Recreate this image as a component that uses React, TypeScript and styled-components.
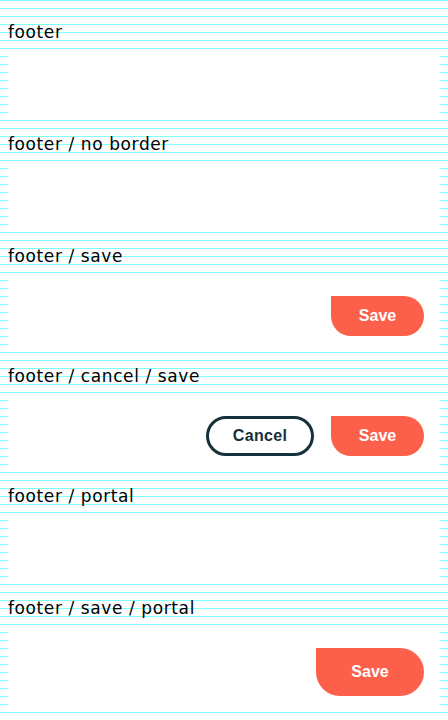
import React from 'react'
import styled, { createGlobalStyle, css } from 'styled-components'

const GlobalStyle = createGlobalStyle`
    html {
        background-color: #fff;
        background-image: repeating-linear-gradient(
            to bottom,
            #80ffff 0,
            #80ffff 1px,
            transparent 1px,
            transparent 8px
        );
        min-height: 100%;
    }
    body {
        margin: 8px;
        font-family: 'DejaVu Sans', 'Liberation Sans', sans-serif;
        color: #000;
    }
`

interface FooterDemo {
    title: string
    cancel?: boolean
    save?: boolean
    portal?: boolean
}

const demos: FooterDemo[] = [
    { title: 'footer' },
    { title: 'footer / no border' },
    { title: 'footer / save', save: true },
    { title: 'footer / cancel / save', cancel: true, save: true },
    { title: 'footer / portal', portal: true },
    { title: 'footer / save / portal', save: true, portal: true },
]

const App: React.FC = () => {
    return (
        <>
            <GlobalStyle />
            <Page>
                {demos.map(demo => (
                    <Section key={demo.title}>
                        <Title>{demo.title}</Title>
                        <Footer>
                            {demo.cancel && <CancelButton>Cancel</CancelButton>}
                            {demo.save && <SaveButton $large={demo.portal}>Save</SaveButton>}
                        </Footer>
                    </Section>
                ))}
            </Page>
        </>
    )
}

export default App

const Page = styled.div`
    display: flex;
    flex-direction: column;
`

const Section = styled.section`
    display: flex;
    flex-direction: column;
`

const Title = styled.div`
    height: 41px;
    box-sizing: border-box;
    padding-top: 14px;
    font-size: 17px;
    line-height: 20px;
    letter-spacing: 0.6px;
    color: #000;
`

const Footer = styled.div`
    display: flex;
    justify-content: flex-end;
    align-items: flex-start;
    gap: 17px;
    min-height: 71px;
    box-sizing: border-box;
    padding: 23px 16px 16px;
    background: #fff;
`

const baseButton = css`
    box-sizing: border-box;
    height: 40px;
    padding: 0;
    font-family: 'Liberation Sans', Arial, sans-serif;
    font-size: 16px;
    font-weight: 700;
    cursor: pointer;
`

const SaveButton = styled.button<{ $large?: boolean }>`
    ${baseButton};
    width: ${p => (p.$large ? '108px' : '93px')};
    height: ${p => (p.$large ? '48px' : '40px')};
    border: none;
    border-radius: ${p => (p.$large ? '0 24px 24px 24px' : '0 20px 20px 20px')};
    background: #fc604b;
    color: #fff;
`

const CancelButton = styled.button`
    ${baseButton};
    width: 108px;
    border: 3px solid #15313a;
    border-radius: 20px;
    background: #fff;
    color: #15313a;
    letter-spacing: 0.3px;
`
